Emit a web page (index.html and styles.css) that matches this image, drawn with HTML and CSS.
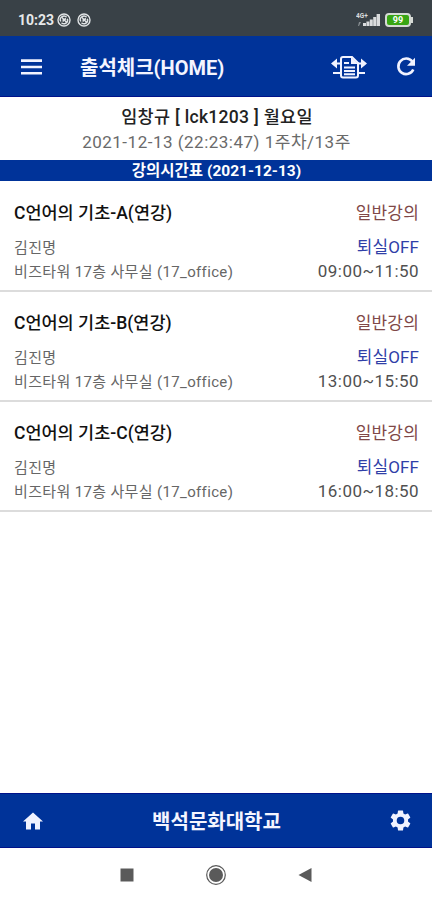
FILE: index.html
```
<!DOCTYPE html>
<html lang="ko">

<head>
    <meta charset="UTF-8">
    <title>출석체크</title>
    <link rel="stylesheet" href="styles.css">
</head>

<body>
    <div id="status">
        <span class="clock">10:23</span>
        <svg class="notice" viewBox="0 0 14 14">
            <circle cx="7" cy="7" r="6" />
            <path d="M3.8 8.5a3.6 3.6 0 0 1 5.8-4.2M10.3 5.7a3.6 3.6 0 0 1-5.8 4M5 4.5l4.7 5M6.2 8.8V6M8.2 5v2" />
        </svg>
        <svg class="notice" viewBox="0 0 14 14">
            <circle cx="7" cy="7" r="6" />
            <path d="M3.8 8.5a3.6 3.6 0 0 1 5.8-4.2M10.3 5.7a3.6 3.6 0 0 1-5.8 4M5 4.5l4.7 5M6.2 8.8V6M8.2 5v2" />
        </svg>
        <svg class="signal" viewBox="0 0 24 14">
            <text x="0" y="5">4G+</text>
            <path class="dim" d="M2 13l1-4h2l-2 4z" />
            <path d="M7 10h3v3H7zM10.400 8.500h3V13h-3zM13.800 6.500h3V13h-3zM17.200 4h3v9h-3zM20.600 1H24v12h-3.400z" />
        </svg>
        <div class="battery">99</div>
    </div>

    <div id="header">
        <svg class="menu" viewBox="0 0 22 16">
            <path d="M0 0h22v2.700H0zM0 6.600h22v2.700H0zM0 13.200h22v2.700H0z" />
        </svg>
        <div class="title">출석체크(HOME)</div>
        <svg class="transfer" viewBox="0 0 36 24">
            <path class="line" d="M9 8.500H4M27 8.500h5M2 18h7M27 18h7" />
            <path class="fill" d="M0 8.500l6-5v10zM36 8.500l-6-5v10z" />
            <path class="line" d="M12 2h9l6 6v12.500q0 2-2 2H12q-2 0-2-2V4q0-2 2-2z" />
            <path class="fill" d="M20 2l7 7h-7z" />
            <path class="line" d="M13 8h5M13 12.500h11M13 16h11M13 19.300h11" />
        </svg>
        <svg class="refresh" viewBox="0 0 20 20">
            <path class="arc" d="M16.300 4.500A7.800 7.800 0 1 0 17.300 12.500" />
            <path class="fill" d="M19 .8v8h-8z" />
        </svg>
    </div>

    <div id="info">
        <div class="user">임창규 [ lck1203 ] 월요일</div>
        <div class="date">2021-12-13 (22:23:47) 1주차/13주</div>
    </div>
    <div id="table-title">강의시간표 (2021-12-13)</div>

    <div id="lectures">
        <div class="lecture">
            <div class="left">
                <div class="name">C언어의 기초-A(연강)</div>
                <div class="teacher">김진명</div>
                <div class="room">비즈타워 17층 사무실 (17_office)</div>
            </div>
            <div class="right">
                <div class="type">일반강의</div>
                <div class="state">퇴실OFF</div>
                <div class="time">09:00~11:50</div>
            </div>
        </div>
        <div class="lecture">
            <div class="left">
                <div class="name">C언어의 기초-B(연강)</div>
                <div class="teacher">김진명</div>
                <div class="room">비즈타워 17층 사무실 (17_office)</div>
            </div>
            <div class="right">
                <div class="type">일반강의</div>
                <div class="state">퇴실OFF</div>
                <div class="time">13:00~15:50</div>
            </div>
        </div>
        <div class="lecture">
            <div class="left">
                <div class="name">C언어의 기초-C(연강)</div>
                <div class="teacher">김진명</div>
                <div class="room">비즈타워 17층 사무실 (17_office)</div>
            </div>
            <div class="right">
                <div class="type">일반강의</div>
                <div class="state">퇴실OFF</div>
                <div class="time">16:00~18:50</div>
            </div>
        </div>
    </div>

    <div id="footer">
        <svg class="home" viewBox="2 3 20 17">
            <path d="M10 20v-6h4v6h5v-8h3L12 3 2 12h3v8z" />
        </svg>
        <div class="school">백석문화대학교</div>
        <svg class="gear" viewBox="2 2 20 20">
            <path d="M19.140 12.940c.04-.3.06-.61.06-.94 0-.32-.02-.64-.07-.94l2.030-1.580a.49.49 0 0 0 .12-.61l-1.920-3.320a.49.49 0 0 0-.59-.22l-2.390.96a7 7 0 0 0-1.620-.94l-.36-2.540a.48.48 0 0 0-.48-.41h-3.840a.48.48 0 0 0-.47.41l-.36 2.540a7.300 7.300 0 0 0-1.620.94l-2.390-.96a.48.48 0 0 0-.59.22L2.740 8.870a.48.48 0 0 0 .12.61l2.030 1.580a6.500 6.500 0 0 0 0 1.880l-2.030 1.580a.49.49 0 0 0-.12.61l1.920 3.320c.12.22.37.29.59.22l2.390-.96c.5.38 1.030.7 1.620.94l.36 2.540c.05.24.24.41.48.41h3.840c.24 0 .44-.17.47-.41l.36-2.540a7 7 0 0 0 1.620-.94l2.390.96c.22.08.47 0 .59-.22l1.920-3.320a.48.48 0 0 0-.12-.61zM12 15.600A3.600 3.600 0 1 1 12 8.400a3.600 3.600 0 0 1 0 7.200z" />
        </svg>
    </div>

    <div id="nav">
        <svg viewBox="0 0 22 22"><path d="M4.500 4.500h13v13h-13z" /></svg>
        <svg viewBox="0 0 22 22">
            <circle class="ring" cx="11" cy="11" r="9.300" />
            <circle cx="11" cy="11" r="7" />
        </svg>
        <svg viewBox="0 0 22 22"><path d="M17.500 4v14L4.500 11z" /></svg>
    </div>
</body>

</html>
```
FILE: styles.css
```
* {
    box-sizing: border-box;
}

body {
    margin: 0;
    height: 900px;
    display: flex;
    flex-direction: column;
    background: #fff;
    font-family: Roboto, 'Noto Sans CJK KR', sans-serif;
    white-space: nowrap;
    overflow: hidden;
}

#status {
    height: 36px;
    padding: 3px 21px 0 18px;
    display: flex;
    align-items: center;
    background: #394147;
    color: #e6e8ea;
}

.clock {
    width: 36px;
    font-size: 14px;
    font-weight: 700;
    margin-right: 3px;
}

.notice {
    width: 14px;
    height: 14px;
    margin-right: 6px;
    fill: none;
    stroke: #e0e3e5;
    stroke-width: 1.4;
}

.signal {
    width: 24px;
    height: 14px;
    margin-left: auto;
    margin-right: 5px;
    fill: #d9dbdd;
}

.signal text {
    font-size: 6.5px;
    font-weight: 700;
}

.signal .dim {
    fill: #858b8f;
}

.battery {
    width: 26px;
    height: 14px;
    border: 2px solid #d5dad5;
    border-radius: 4px;
    background: #38a514;
    color: #fff;
    font-size: 9px;
    font-weight: 700;
    line-height: 10px;
    text-align: center;
    position: relative;
}

.battery::after {
    content: '';
    position: absolute;
    right: -4px;
    top: 2px;
    width: 2px;
    height: 6px;
    background: #d5dad5;
}

#header {
    height: 61px;
    padding: 2px 16px 0 21px;
    display: flex;
    align-items: center;
    background: #003399;
    border-bottom: 1px solid #00128a;
    color: #f4f5ff;
}

#header svg,
#footer svg {
    fill: #f1f3ff;
}

#header .menu {
    width: 21px;
    height: 16px;
    margin-right: 38px;
}

.title {
    flex: 1;
    padding-bottom: 2px;
    font-size: 20px;
    font-weight: 700;
}

#header .line,
#header .arc {
    fill: none;
    stroke: #f1f3ff;
    stroke-width: 2;
}

#header .arc {
    stroke-width: 2.6;
}

.transfer {
    width: 36px;
    height: 24px;
    margin-right: 29px;
}

.refresh {
    width: 20px;
    height: 20px;
}

#info {
    height: 63px;
    padding-top: 7px;
    text-align: center;
}

.user {
    height: 26px;
    line-height: 27px;
    font-size: 17.5px;
    font-weight: 500;
    letter-spacing: 0.3px;
    padding-left: 2px;
    color: #222;
}

.date {
    height: 25px;
    line-height: 25px;
    font-size: 17px;
    letter-spacing: 0.5px;
    padding-left: 1px;
    color: #6a6a6a;
}

#table-title {
    height: 21px;
    line-height: 22px;
    background: #003399;
    color: #fff;
    font-size: 15.5px;
    font-weight: 700;
    text-align: center;
    padding-left: 1px;
}

#lectures {
    flex: 1;
    padding-top: 1px;
}

.lecture {
    height: 110px;
    padding: 18px 13px 0 14px;
    display: flex;
    justify-content: space-between;
    border-bottom: 2px solid #dcdcdc;
}

.name {
    height: 36px;
    line-height: 27px;
    font-size: 17.5px;
    font-weight: 500;
    color: #111;
}

.teacher,
.room,
.state,
.time {
    height: 24px;
    line-height: 24px;
}

.teacher,
.room {
    font-size: 15px;
    letter-spacing: 0.35px;
    color: #666;
}

.right {
    text-align: right;
    font-size: 17px;
}

.type {
    height: 35px;
    line-height: 27px;
    letter-spacing: 0.2px;
    color: #804848;
}

.state {
    letter-spacing: 0.1px;
    color: #303fa8;
}

.time {
    letter-spacing: 0.45px;
    color: #505050;
}

#footer {
    height: 55px;
    padding: 0 21px 0 23px;
    display: flex;
    align-items: center;
    justify-content: space-between;
    background: #003399;
    border: solid #00128a;
    border-width: 1px 0;
    color: #f4f5ff;
}

.home {
    width: 20px;
    height: 18px;
}

.school {
    font-size: 20px;
    font-weight: 700;
}

.gear {
    width: 21px;
    height: 21px;
}

#nav {
    height: 52px;
    padding: 1px 116px 0;
    display: flex;
    align-items: center;
    justify-content: space-between;
}

#nav svg {
    width: 22px;
    height: 22px;
    fill: #5a5a5a;
}

#nav .ring {
    fill: none;
    stroke: #5a5a5a;
    stroke-width: 1.2;
}
```
